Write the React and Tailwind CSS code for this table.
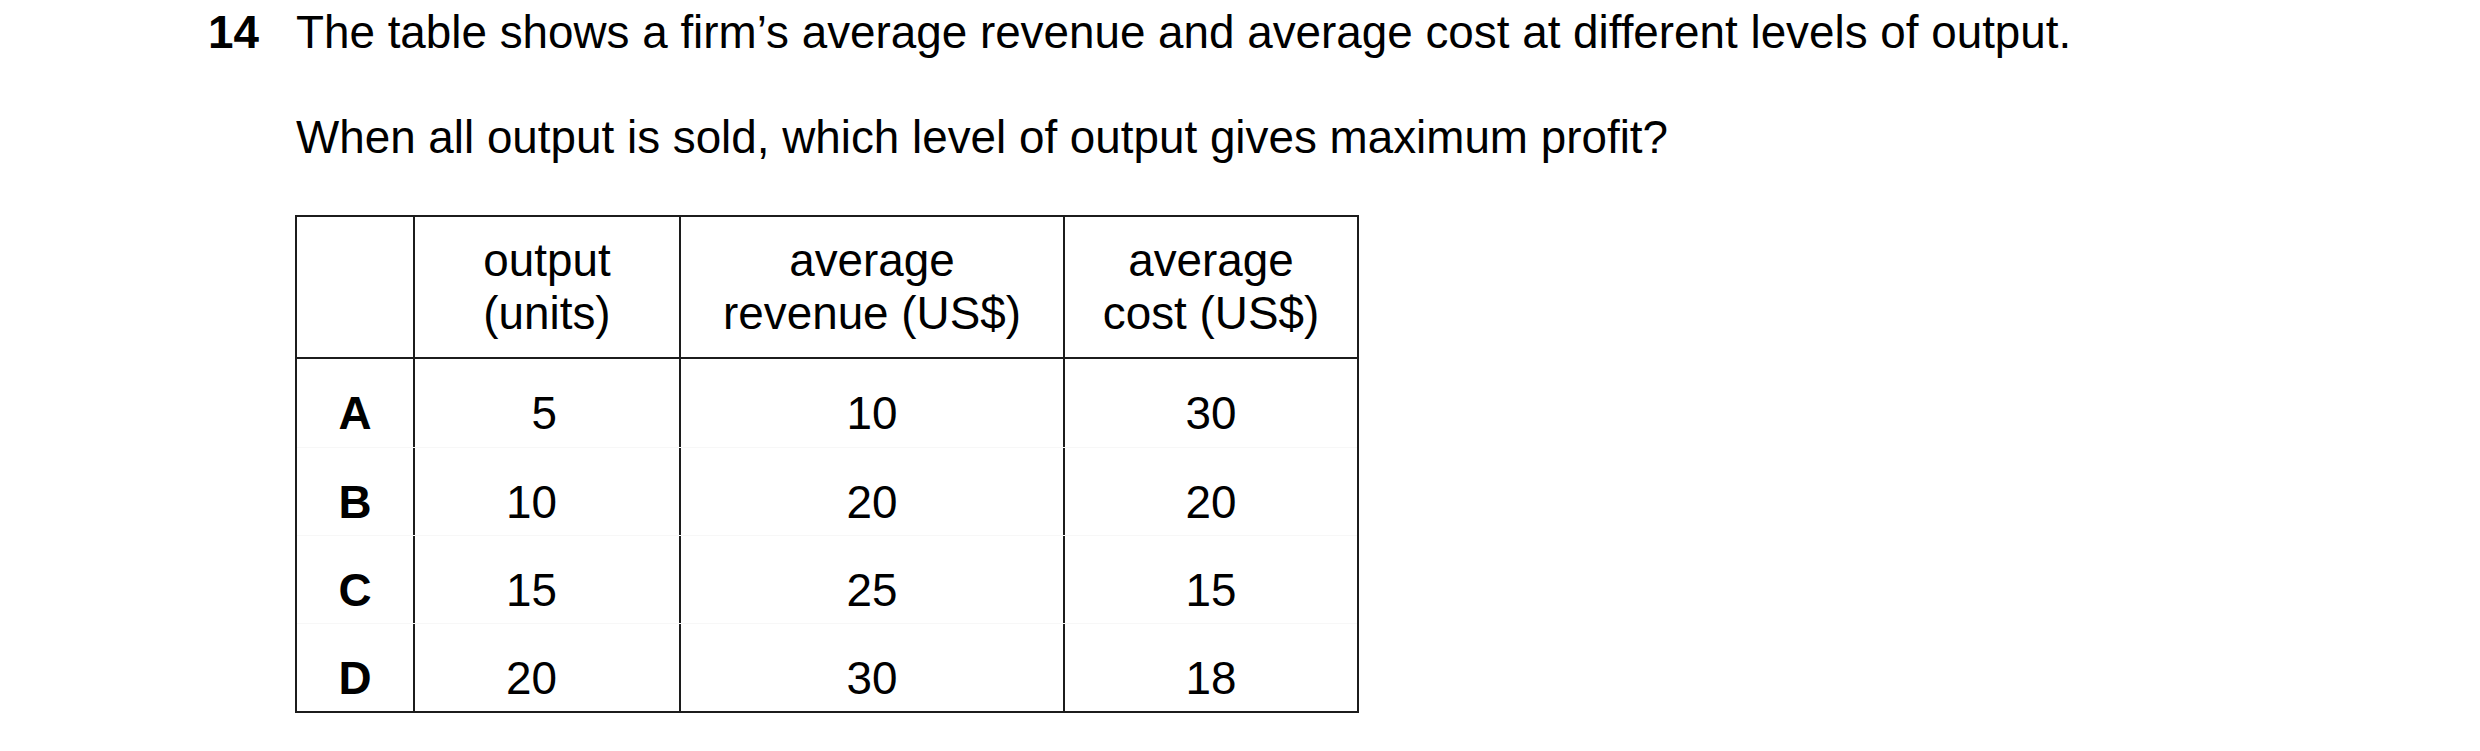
const rows = [
  { key: 'A', output: '5', revenue: '10', cost: '30' },
  { key: 'B', output: '10', revenue: '20', cost: '20' },
  { key: 'C', output: '15', revenue: '25', cost: '15' },
  { key: 'D', output: '20', revenue: '30', cost: '18' },
]

function DataTable() {
  return (
    <div className="w-[1064px] border-2 border-[#1c1c1c]">
      <div className="flex h-[142px] border-b-2 border-[#1c1c1c] text-center">
        <div className="w-[116px]" />
        <div className="flex w-[266px] items-center justify-center border-l-2 border-[#1c1c1c]">
          <p>
            output
            <br />
            (units)
          </p>
        </div>
        <div className="flex w-[384px] items-center justify-center border-l-2 border-[#1c1c1c]">
          <p>
            average
            <br />
            revenue (US$)
          </p>
        </div>
        <div className="flex w-[294px] items-center justify-center border-l-2 border-[#1c1c1c]">
          <p>
            average
            <br />
            cost (US$)
          </p>
        </div>
      </div>
      {rows.map((row, index) => (
        <div
          key={row.key}
          className={`flex h-[88px] ${index > 0 ? 'border-t border-[#f7f7f7]' : ''}`}
        >
          <div className="w-[116px] pt-[28px] text-center font-bold">{row.key}</div>
          <div className="w-[266px] border-l-2 border-[#1c1c1c] pt-[28px] pr-[122px] text-right">{row.output}</div>
          <div className="w-[384px] border-l-2 border-[#1c1c1c] pt-[28px] text-center">{row.revenue}</div>
          <div className="w-[294px] border-l-2 border-[#1c1c1c] pt-[28px] text-center">{row.cost}</div>
        </div>
      ))}
    </div>
  )
}

function App() {
  return (
    <div className="min-h-[751px] w-[2480px] bg-white pt-[6px] text-[45.8px] leading-[53px] text-black [font-family:'Liberation_Sans',Arial,sans-serif]">
      <div className="flex">
        <div className="w-[296px] pl-[208px] font-bold">14</div>
        <div>
          <p>The table shows a firm’s average revenue and average cost at different levels of output.</p>
          <p className="mt-[52px]">When all output is sold, which level of output gives maximum profit?</p>
          <div className="mt-[51px] -ml-[1px]">
            <DataTable />
          </div>
        </div>
      </div>
    </div>
  )
}

export default App
